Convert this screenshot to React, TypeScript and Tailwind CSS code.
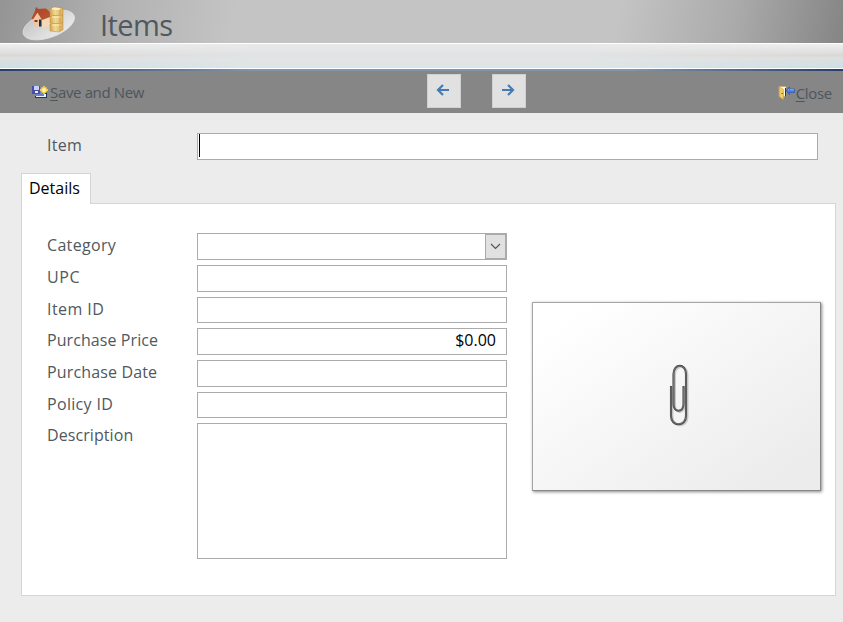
import React from "react";

function HomeLogo() {
  return (
    <svg width="56" height="42" viewBox="0 0 56 42" className="shrink-0 translate-x-px">
      <defs>
        <linearGradient id="disc" x1="0" y1="0" x2="0.6" y2="1">
          <stop offset="0" stopColor="#c2c2c2" />
          <stop offset="1" stopColor="#e8e8e8" />
        </linearGradient>
        <linearGradient id="roof" x1="0" y1="0" x2="1" y2="1">
          <stop offset="0" stopColor="#b4401f" />
          <stop offset="1" stopColor="#b95538" />
        </linearGradient>
        <linearGradient id="box" x1="0" y1="0" x2="1" y2="0">
          <stop offset="0" stopColor="#d3a64c" />
          <stop offset="0.4" stopColor="#f2d995" />
          <stop offset="1" stopColor="#d8ae5c" />
        </linearGradient>
      </defs>
      <ellipse cx="26.8" cy="25" rx="27" ry="12.4" transform="rotate(-20 26.8 25)" fill="url(#disc)" stroke="#dedede" strokeWidth="0.8" />
      <path d="M11 19 L15 12 L20 20 V28 L11 25 Z" fill="#f2c7a0" />
      <path d="M19 19 L28 15 V26 L20 28 Z" fill="#f3d9b5" />
      <path d="M14 9 L24 8.5 L28 12 V17 L20 20 L15.5 12.5 L11 19.5 L9.5 18.5 Z" fill="url(#roof)" />
      <path d="M14.5 7.5 V11" stroke="#9f4a30" strokeWidth="2" />
      <rect x="17" y="19.5" width="2.5" height="7" fill="#202a49" />
      <rect x="12.5" y="20" width="3" height="2" fill="#743b2c" />
      <g fill="url(#box)" stroke="#bd8b3b" strokeWidth="0.5">
        <path d="M28 9 L31 7 L41 8 V15 L38 16 L28 15 Z" />
        <path d="M28 16 L41 15 V23 L38 24 L28 23 Z" />
        <path d="M28 24 L41 23 V30 L37 32 L28 31 Z" />
      </g>
      <path d="M30 9 L32 8 L38 8.5 L37 9.5 Z M30 17 H37 M30 25 H37" fill="#fff0bd" stroke="#fff0bd" strokeWidth="1" />
      <path d="M38 10 V15 M38 18 V23 M38 26 V31" stroke="#c3953f" strokeWidth="0.7" />
    </svg>
  );
}

function SaveNewIcon() {
  return (
    <svg width="16" height="13" viewBox="0 0 16 13" className="shrink-0">
      <rect x="3" y="6" width="12" height="6" fill="#1b3569" />
      <rect x="4" y="8" width="10" height="3" fill="#eaf3ff" />
      <rect x="3" y="6" width="9" height="4" fill="#6b82c8" />
      <rect x="0" y="0" width="8" height="8" fill="#454eab" />
      <rect x="2" y="0" width="5" height="4" fill="#cbd0ef" />
      <rect x="3" y="5" width="3" height="2" fill="#e7eaff" />
      <path d="M12 0 V8 M8 4 H16 M9.5 1.5 L14.5 6.5 M14.5 1.5 L9.5 6.5" stroke="#f5cb48" strokeWidth="1.8" />
      <circle cx="12" cy="4" r="2" fill="#fff6ad" />
    </svg>
  );
}

function DoorIcon() {
  return (
    <svg width="17" height="15" viewBox="0 0 17 15" className="shrink-0">
      <rect x="1" y="0.5" width="7" height="10" fill="#fffbe2" stroke="#c3a66b" strokeWidth="0.7" />
      <path d="M7.5 2 V10.5" stroke="#35332d" />
      <path d="M1.5 1 L5.5 3.5 V13.5 L1.5 11 Z" fill="#f1cc60" stroke="#c99a3a" strokeWidth="0.6" />
      <path d="M3.5 7.5 H5" stroke="#634418" strokeWidth="0.8" />
      <path d="M8 4.8 L11.5 1 V3 H16.5 V6.5 H11.5 V8.5 Z" fill="#4678e5" stroke="#294db0" strokeWidth="0.6" />
      <path d="M10 4.3 L11.5 3 M12 3.8 H16" stroke="#92b4ff" />
    </svg>
  );
}

function Arrow({ right = false }: { right?: boolean }) {
  return (
    <button className="flex h-[34px] w-[34px] items-center justify-center border border-[#d0d0d0] bg-[#e1e1e1]">
      <svg width="14" height="12" viewBox="0 0 14 12" fill="none" stroke="#447bb5" strokeWidth="2.2" className={right ? "-translate-x-px -translate-y-px -scale-x-100" : "-translate-x-px -translate-y-px"}>
        <path d="M7 1 L2 6 L7 11 M2 6 H13" />
      </svg>
    </button>
  );
}

function Paperclip() {
  return (
    <svg width="24" height="66" viewBox="0 0 24 66" fill="none" className="translate-x-[3px] -translate-y-[2px]">
      <path d="M3 24 V54 C3 65 18 65 18 54 V12 C18 1 5.5 1 5.5 12 V42 C5.5 51 15.5 51 15.5 42 V24" stroke="#888" strokeWidth="2.4" transform="translate(1.3 1)" opacity="0.4" />
      <path d="M3 24 V54 C3 65 18 65 18 54 V12 C18 1 5.5 1 5.5 12 V42 C5.5 51 15.5 51 15.5 42 V24" stroke="#4b4b4b" strokeWidth="2.1" />
      <path d="M3 25 V54 C3 64.5 18 64.5 18 54 V12 C18 1.5 5.5 1.5 5.5 12 V42 C5.5 50.5 15.5 50.5 15.5 42 V25" stroke="#929292" strokeWidth="0.5" />
    </svg>
  );
}

const fields = [
  { name: "Category", tracking: "tracking-[0.32px]" },
  { name: "UPC", tracking: "tracking-[0.65px]" },
  { name: "Item ID", tracking: "tracking-[0.45px]" },
  { name: "Purchase Price", tracking: "tracking-[0.08px]" },
  { name: "Purchase Date", tracking: "tracking-[0.15px]" },
  { name: "Policy ID", tracking: "tracking-[0.32px]" },
  { name: "Description", tracking: "tracking-[0.08px]" },
];

export default function App() {
  return (
    <div className="flex h-[622px] w-[843px] flex-col overflow-hidden bg-[#ececec] font-['Open_Sans','Noto_Sans',sans-serif] text-[16px] text-[#505860]">
      <header className="flex h-[43px] shrink-0 items-start bg-[linear-gradient(100deg,#949494_0%,#b1b1b1_13%,#c4c4c4_28%,#c4c4c4_73%,#aaaaaa_87%,#858585_100%)] pl-[21px]">
        <HomeLogo />
        <h1 className="ml-[23px] mt-[5px] text-[29px] leading-[40px] tracking-[-0.6px]">Items</h1>
      </header>
      <div className="h-[26px] shrink-0 border-y border-white bg-[linear-gradient(to_bottom,#efefef_0%,#dedddc_40%,#d9d7d5_46%,#dddfdf_60%,#cddfe7_100%)]">
        <div className="h-full bg-[linear-gradient(to_right,transparent_0%,#e5e7e8aa_30%,#e5e7e8aa_70%,transparent_100%)]" />
      </div>
      <div className="h-[2px] shrink-0 bg-[linear-gradient(to_right,#243e67,#8194a9_30%,#8194a9_75%,#243e67)]" />
      <nav className="flex h-[42px] shrink-0 items-start bg-[#868686] text-[#4d555d]">
        <div className="flex w-[395px] items-center pl-[32px] pt-[10px]">
          <SaveNewIcon />
          <span className="ml-[2px] text-[15px] leading-[22px] tracking-[-0.35px]"><span className="underline underline-offset-2">S</span>ave and New</span>
        </div>
        <div className="ml-[32px] mt-[3px] flex gap-[31px]"><Arrow /><Arrow right /></div>
        <div className="ml-auto mr-[11px] mt-[11px] flex items-center">
          <DoorIcon />
          <span className="ml-px text-[15px] leading-[22px] tracking-[-0.3px]"><span className="underline underline-offset-2">C</span>lose</span>
        </div>
      </nav>
      <main className="flex flex-1 flex-col pl-[21px] pt-[20px]">
        <div className="flex h-[27px] shrink-0">
          <label className="w-[176px] pl-[26px] leading-[24px] tracking-[0.3px]">Item</label>
          <div className="h-[27px] w-[621px] border border-[#ababab] bg-white pl-px"><div className="h-[23px] w-px bg-black" /></div>
        </div>
        <div className="z-10 mt-[13px] h-[31px] w-[70px] shrink-0 border border-b-0 border-[#d5d5d5] bg-white pl-[7px] leading-[28px] text-black">Details</div>
        <section className="-mt-px flex h-[393px] w-[815px] shrink-0 border border-[#d5d5d5] bg-white">
          <div className="ml-[25px] mt-[29px] grid h-[326px] grid-cols-[150px_310px] grid-rows-[27px_27px_26px_27px_27px_26px_136px] gap-y-[5px]">
            {fields.map(({ name, tracking }) => (
              <React.Fragment key={name}>
                <label className={`leading-[24px] ${tracking}`}>{name}</label>
                <div className="flex justify-end border border-[#ababab] bg-white text-black">
                  {name === "Category" && (
                    <button className="flex h-[25px] w-[21px] items-center justify-center border border-[#aaa] bg-[#e1e1e1]">
                      <svg width="11" height="7" viewBox="0 0 11 7" fill="none" stroke="#555" strokeWidth="1.2"><path d="M1 1 L5.5 5.5 L10 1" /></svg>
                    </button>
                  )}
                  {name === "Purchase Price" && <span className="mr-[10px] leading-[22px]">$0.00</span>}
                </div>
              </React.Fragment>
            ))}
          </div>
          <div className="ml-[25px] mt-[98px] flex h-[189px] w-[289px] items-center justify-center border border-t-[#a5a5a5] border-r-[#888] border-b-[#888] border-l-[#a5a5a5] bg-[linear-gradient(145deg,#ffffff_10%,#ececec_90%)] shadow-[1px_1px_3px_#888]">
            <Paperclip />
          </div>
        </section>
      </main>
    </div>
  );
}
